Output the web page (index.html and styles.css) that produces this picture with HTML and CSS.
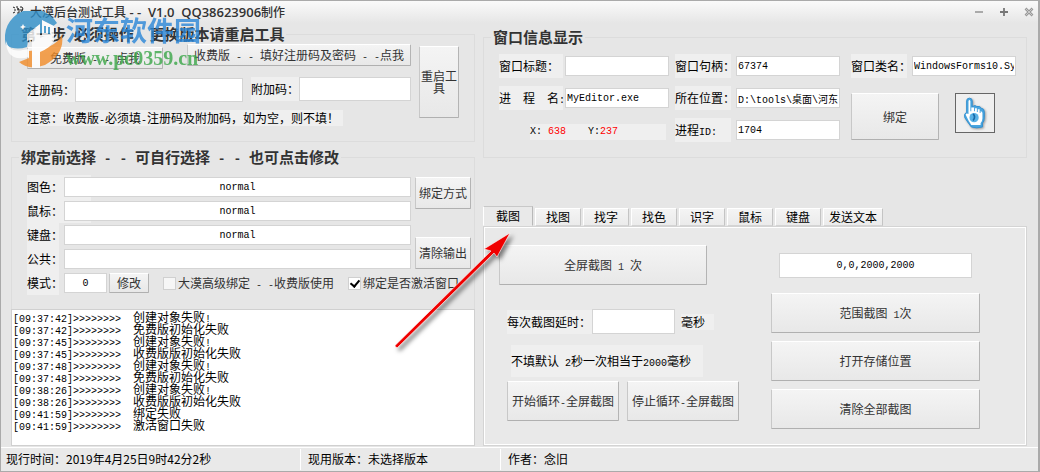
FILE: index.html
```html
<!DOCTYPE html>
<html lang="zh-CN">
<head>
<meta charset="utf-8">
<title>大漠后台测试工具</title>
<link rel="stylesheet" href="styles.css">
</head>
<body>
<div class="window">
  <header class="titlebar">
    <svg class="app-icon" viewBox="0 0 12 10" aria-hidden="true"><path d="M1 2l2 1M2 5h2M1 8l2-1M5 1v2l2 1M5 5l2-1v4M5 8h2M8 2h2l1 2-2 3M8 5h3" fill="none" stroke="#222" stroke-width="1"/></svg>
    <h1 class="title">大漠后台测试工具<span class="title-latin">&nbsp;- -&nbsp; V1.0&nbsp; QQ38623906</span>制作</h1>
    <div class="window-buttons">
      <button class="win-btn" aria-label="最小化"><svg viewBox="0 0 10 10"><path d="M1 5h8" stroke="#999" stroke-width="1.6"/></svg></button>
      <button class="win-btn" aria-label="最大化"><svg viewBox="0 0 10 10"><path d="M1 5h8M5 1v8" stroke="#777" stroke-width="1.8"/></svg></button>
      <button class="win-btn" aria-label="关闭"><svg viewBox="0 0 10 10"><path d="M1.5 1.5l7 7M8.500 1.500l-7 7" stroke="#999" stroke-width="2.600"/><path d="M2 2l6 6M8 2l-6 6" stroke="#ddd" stroke-width=".7"/></svg></button>
    </div>
  </header>

  <main class="main">
    <section class="left">
      <fieldset class="group">
        <legend>第一步<span class="half"> </span>必须操作<span class="half">&nbsp; </span>更换版本请重启工具</legend>
        <div class="register">
          <div class="register-body">
            <div class="stagger">
              <button class="btn free low">免费版<span class="half"> - - </span>点我</button>
              <button class="btn paid">收费版<span class="half"> - - </span>填好注册码及密码<span class="half"> - -</span>点我</button>
            </div>
            <div class="stagger">
              <div class="pair reg low"><label for="reg" class="tag w48">注册码：</label><input id="reg" class="box tall" type="text"></div>
              <div class="pair add"><label for="add" class="tag w48">附加码：</label><input id="add" class="box tall" type="text"></div>
            </div>
            <p class="note">注意：收费版<span class="half">-</span>必须填<span class="half">-</span>注册码及附加码，如为空，则不填！</p>
          </div>
          <button class="btn restart">重启工具</button>
        </div>
      </fieldset>

      <fieldset class="group open">
        <legend>绑定前选择<span class="half"> - - </span>可自行选择<span class="half"> - - </span>也可点击修改</legend>
        <div class="bind">
          <div class="bind-rows">
            <div class="bind-row shaded"><label for="b1" class="tag w32">图色：</label><input id="b1" class="box center" type="text" value="normal"></div>
            <div class="bind-row shaded"><label for="b2" class="tag w32">鼠标：</label><input id="b2" class="box center" type="text" value="normal"></div>
            <div class="bind-row"><label for="b3" class="tag w32">键盘：</label><input id="b3" class="box center" type="text" value="normal"></div>
            <div class="bind-row"><label for="b4" class="tag w32">公共：</label><input id="b4" class="box center" type="text"></div>
          </div>
          <div class="bind-buttons">
            <button class="btn side">绑定方式</button>
            <button class="btn side">清除输出</button>
          </div>
        </div>
        <div class="mode">
          <label for="mode" class="tag w32">模式：</label>
          <input id="mode" class="box center mode-box" type="text" value="0">
          <button class="btn modify">修改</button>
          <div class="check"><input id="c1" type="checkbox"><label for="c1">大漠高级绑定<span class="half"> - -</span>收费版使用</label></div>
          <div class="check"><input id="c2" type="checkbox" checked><label for="c2">绑定是否激活窗口</label></div>
        </div>
      </fieldset>

      <ol class="log">
        <li><span class="half">[09:37:42]&gt;&gt;&gt;&gt;&gt;&gt;&gt;&gt;  </span>创建对象失败<span class="half">!</span></li>
        <li><span class="half">[09:37:42]&gt;&gt;&gt;&gt;&gt;&gt;&gt;&gt;  </span>免费版初始化失败</li>
        <li><span class="half">[09:37:45]&gt;&gt;&gt;&gt;&gt;&gt;&gt;&gt;  </span>创建对象失败<span class="half">!</span></li>
        <li><span class="half">[09:37:45]&gt;&gt;&gt;&gt;&gt;&gt;&gt;&gt;  </span>收费版版初始化失败</li>
        <li><span class="half">[09:37:48]&gt;&gt;&gt;&gt;&gt;&gt;&gt;&gt;  </span>创建对象失败<span class="half">!</span></li>
        <li><span class="half">[09:37:48]&gt;&gt;&gt;&gt;&gt;&gt;&gt;&gt;  </span>免费版初始化失败</li>
        <li><span class="half">[09:38:26]&gt;&gt;&gt;&gt;&gt;&gt;&gt;&gt;  </span>创建对象失败<span class="half">!</span></li>
        <li><span class="half">[09:38:26]&gt;&gt;&gt;&gt;&gt;&gt;&gt;&gt;  </span>收费版版初始化失败</li>
        <li><span class="half">[09:41:59]&gt;&gt;&gt;&gt;&gt;&gt;&gt;&gt;  </span>绑定失败</li>
        <li><span class="half">[09:41:59]&gt;&gt;&gt;&gt;&gt;&gt;&gt;&gt;  </span>激活窗口失败</li>
      </ol>
    </section>

    <section class="right">
      <fieldset class="group info-group">
        <legend>窗口信息显示</legend>
        <div class="info">
          <div class="info-col first">
            <div class="pair"><label for="i1" class="tag w64">窗口标题：</label><input id="i1" class="box" type="text"></div>
            <div class="pair"><label for="i2" class="tag w64">进　程　名<span class="half">:</span></label><input id="i2" class="box" type="text" value="MyEditor.exe"></div>
            <div class="coords"><span>X: <output class="red">638</output></span><span>Y:<output class="red">237</output></span></div>
          </div>
          <div class="info-col second">
            <div class="pair"><label for="i3" class="tag w56">窗口句柄：</label><input id="i3" class="box" type="text" value="67374"></div>
            <div class="pair"><label for="i4" class="tag w56">所在位置：</label><input id="i4" class="box" type="text" value="D:\tools\桌面\河东"></div>
            <div class="pair"><label for="i5" class="tag w56">进程<span class="half">ID:</span></label><input id="i5" class="box" type="text" value="1704"></div>
          </div>
          <div class="info-col third">
            <div class="pair"><label for="i6" class="tag w56">窗口类名：</label><input id="i6" class="box" type="text" value="WindowsForms10.SysTreeView"></div>
            <div class="bind-actions">
              <button class="btn do-bind">绑定</button>
              <button class="hand" aria-label="选择窗口">
                <svg viewBox="0 0 28 34"><path d="M5 4q0-3 3-3t3 3v6l3-1 2 1 3 0 2 2q3 0 3 4v6q0 4-2 6v4q-6 2-12 0l-3-4-4-6q-1-4 1-5l1 1z" fill="#49a5df" stroke="#2e8fd0" stroke-width="1"/><path d="M7 20V4q1-2 2 0v11h1v-4h3v4h1v-3h2v4h1v-3h2v4h1v-2q2 0 2 2v6q0 3-2 5v2H10l-3-5-3-6q0-2 3-1z" fill="#fff"/><circle cx="13" cy="22" r="5" fill="#58b2e6"/><path d="M12 18q3 3 0 7" fill="none" stroke="#1769a8" stroke-width="1.800"/></svg>
              </button>
            </div>
          </div>
        </div>
      </fieldset>

      <div class="tabs" role="tablist">
        <button class="tab active" role="tab" aria-selected="true">截图</button>
        <button class="tab" role="tab">找图</button>
        <button class="tab" role="tab">找字</button>
        <button class="tab" role="tab">找色</button>
        <button class="tab" role="tab">识字</button>
        <button class="tab" role="tab">鼠标</button>
        <button class="tab" role="tab">键盘</button>
        <button class="tab long" role="tab">发送文本</button>
      </div>
      <div class="panel" role="tabpanel">
        <div class="panel-left">
          <button class="btn big shot">全屏截图<span class="half"> 1 </span>次</button>
          <div class="delay">
            <label for="delay" class="tag w85">每次截图延时：</label>
            <input id="delay" class="box tall" type="text">
            <span class="unit">毫秒</span>
          </div>
          <p class="hint">不填默认<span class="half"> 2</span>秒一次相当于<span class="half">2000</span>毫秒</p>
          <div class="loop">
            <button class="btn big">开始循环<span class="half">-</span>全屏截图</button>
            <button class="btn big">停止循环<span class="half">-</span>全屏截图</button>
          </div>
        </div>
        <div class="panel-right">
          <input class="box tall center range" type="text" aria-label="截图范围" value="0,0,2000,2000">
          <button class="btn big">范围截图<span class="half"> 1</span>次</button>
          <button class="btn big">打开存储位置</button>
          <button class="btn big">清除全部截图</button>
        </div>
      </div>
    </section>
  </main>

  <footer class="status">
    <span class="cell">现行时间：2019年4月25日9时42分2秒</span>
    <span class="cell">现用版本：未选择版本</span>
    <span class="cell">作者：念旧</span>
  </footer>

  <div class="watermark">
    <svg class="wm-logo" viewBox="0 0 58 58" aria-hidden="true">
      <path d="M1 34A28 28 0 0 1 52 12L40 22 24 24 22 36Q10 40 1 34z" fill="#2f8fc9"/>
      <path d="M57 24Q60 43 40 54Q24 60 14 51L24 47V40Q50 38 57 24z" fill="#f28c28"/>
      <path d="M1 30Q4 42 18 39L24 38V46Q10 50 4 42Q1 37 1 30z" fill="#fff"/>
      <path d="M22 23l13-10v14q5-3 9 0v9q-4 3-9 5v16h-8V28l-5 2z" fill="#fff"/>
      <path d="M37 9l12 6v15l-5 6V27l-7-2z" fill="#fff"/>
      <path d="M40 15v7M44 16v7" stroke="#2f8fc9" stroke-width="2"/>
      <path d="M18 13l1 2 2 1-2 1-1 2-1-2-2-1 2-1z" fill="#fff"/>
    </svg>
    <div class="wm-text"><span class="wm-name">河东软件园</span><span class="wm-url">www.pc0359.cn</span></div>
  </div>

  <svg class="arrow" viewBox="0 0 130 130" aria-hidden="true">
    <g stroke="#fff" stroke-opacity=".6" stroke-width="1"><path d="M5 116.500L101 22 94 20 120 4 107 28 104 24 7.500 118.500Q5 119 5 116.500z" fill="#f00000"/></g>
  </svg>
</div>
</body>
</html>
```

FILE: styles.css
```css
* { box-sizing: border-box; }

body {
  margin: 0;
  font: 12px/16px "Noto Sans CJK SC", sans-serif;
  color: #000;
}

button, input { font: inherit; color: inherit; margin: 0; }
p, h1, ol { margin: 0; padding: 0; }

.half {
  font-family: "Liberation Mono", monospace;
  font-size: 10px;
  line-height: 0;
  white-space: pre;
}

.window {
  position: relative;
  display: flex;
  flex-direction: column;
  min-height: 100vh;
  background: #e6e6e6;
  border: 1px solid #aaa;
  border-right-width: 2px;
}

/* title bar */
.titlebar {
  display: flex;
  align-items: center;
  height: 22px;
  padding: 0 4px 0 11px;
  background: linear-gradient(#fafafa, #e6e6e6);
}
.app-icon { width: 12px; height: 10px; margin-bottom: 4px; }
.title {
  flex: 1;
  margin-left: 6px;
  font-size: 12px;
  line-height: 20px;
  font-weight: 500;
  color: #333;
}
.title-latin { font: 600 13px/1 "Open Sans", sans-serif; }
.window-buttons { display: flex; gap: 15px; }
.win-btn { width: 10px; height: 10px; padding: 0; border: 0; background: none; display: flex; }
.win-btn svg { width: 10px; height: 10px; }

/* page columns */
.main {
  flex: 1;
  display: grid;
  grid-template-columns: 464fr 544fr;
  gap: 8px;
  padding: 0 11px 1px 10px;
}
.left, .right { display: flex; flex-direction: column; min-width: 0; }
.left { padding-top: 1px; }
.right { padding-top: 4px; }

.group {
  min-width: 0;
  margin: 0;
  padding: 0 15px 15px;
  border: 1px solid #dcdcdc;
}
.group legend {
  padding: 0 2px;
  margin-left: -8px;
  font-size: 15px;
  line-height: 20px;
  font-weight: 700;
  color: #333;
}
.group legend .half { font-size: 13px; }

/* shared controls */
.btn {
  padding: 0;
  border: 1px solid;
  border-color: #fff #b4b4b4 #b0b0b0 #c8c8c8;
  border-radius: 1px;
  background: linear-gradient(#f4f4f4, #e8e8e8);
  color: #333;
  line-height: 16px;
}
.big { height: 40px; }
.box {
  flex: 1;
  width: 0;
  min-width: 0;
  height: 20px;
  padding: 0 1px;
  border: 1px solid #d4d4d4;
  border-radius: 0;
  background: #fff;
  font: 10px "Liberation Mono", "Noto Sans CJK SC", monospace;
}
.tall { height: 25px; }
.center { text-align: center; }
.tag {
  flex: none;
  height: 24px;
  line-height: 24px;
  background: #efefef;
  white-space: nowrap;
}
.w32 { width: 32px; }
.w48 { width: 48px; }
.w56 { width: 56px; }
.w64 { width: 64px; }
.w85 { width: 85px; }
.pair { display: flex; align-items: center; }

/* registration */
.register { display: flex; gap: 8px; }
.register-body { flex: 1; display: flex; flex-direction: column; gap: 8px; }
.stagger { display: flex; justify-content: space-between; align-items: flex-start; height: 25px; gap: 8px; }
.low { align-self: flex-end; }
.free { width: 136px; height: 22px; }
.paid { width: 224px; height: 22px; }
.stagger .tall { height: 24px; }
.reg { flex: 216; }
.add { flex: 160; }
.note { align-self: flex-start; padding-right: 4px; background: #efefef; }
.restart { width: 40px; height: 72px; margin-top: 2px; line-height: 12px; }

/* binding */
.open { margin-top: 5px; padding: 8px 3px 14px 15px; border-bottom: 0; }
.bind { display: flex; gap: 4px; }
.bind-rows { flex: 1; }
.bind-row { display: flex; align-items: center; gap: 5px; }
.shaded { background: linear-gradient(#efefef, #efefef) 0 0 / 64px 100% no-repeat; }
.bind-buttons { display: flex; flex-direction: column; gap: 28px; padding-top: 2px; }
.side { width: 56px; height: 32px; }
.mode { display: flex; align-items: center; }
.mode-box { flex: none; width: 43px; margin: 0 2px 0 5px; }
.modify { width: 40px; height: 20px; }
.check { display: flex; align-items: center; margin-left: 14px; color: #333; gap: 2px; white-space: nowrap; }
.check input {
  appearance: none;
  width: 13px;
  height: 13px;
  border: 1px solid #d0d0d0;
  background: #f6f6f6;
}
.check input:checked { background: #fff; }
.check input:checked::before {
  content: "";
  display: block;
  width: 4px;
  height: 7px;
  margin: 0 0 0 3px;
  border: solid #000;
  border-width: 0 2px 2px 0;
  transform: rotate(40deg);
}

.log {
  flex: 1;
  padding: 1px;
  list-style: none;
  border: 1px solid #d0d0d0;
  background: #fff;
  line-height: 12px;
}
.log li { height: 12px; white-space: pre; }

/* window information */
.info-group { padding: 7px 10px 15px 15px; }
.info { display: flex; }
.info-col { flex: 165; min-width: 0; display: flex; flex-direction: column; gap: 8px; }
.first { flex: 170; }
.first .pair { gap: 2px; }
.second { margin-left: 6px; }
.third { margin-left: 11px; gap: 15px; }
.second .pair, .third .pair { gap: 5px; }
.coords {
  display: flex;
  gap: 22px;
  margin: 6px 3px 0 31px;
  background: #efefef;
  font: 10px/16px "Liberation Mono", monospace;
}
.red { color: #f00; }
.bind-actions { display: flex; gap: 16px; }
.do-bind { width: 88px; height: 47px; }
.hand {
  width: 40px;
  height: 40px;
  padding: 0;
  border: 1px solid #666;
  background: #efefef;
  display: flex;
  align-items: center;
  justify-content: center;
}
.hand svg { width: 26px; height: 32px; filter: drop-shadow(1px 1px 1px #999); }

/* tabs */
.tabs { display: flex; align-items: flex-end; gap: 2px; margin-top: 48px; }
.tab {
  width: 46px;
  height: 18px;
  padding: 0;
  border: 1px solid;
  border-color: #fff #c4c4c4 #d4d4d4 #fff;
  background: linear-gradient(#f4f4f4, #ebebeb);
  line-height: 16px;
}
.tab.active {
  width: 50px;
  height: 20px;
  border-color: #c8c8c8 #b8b8b8 #e9e9e9 #fff;
  background: #e9e9e9;
}
.tab.long { width: 60px; }
.panel {
  flex: 1;
  display: grid;
  grid-template-columns: 240fr 208fr;
  gap: 32px;
  padding: 18px 46px 16px 14px;
  border: 1px solid #d4d4d4;
  box-shadow: inset 0 0 0 1px #fff;
  background: #e9e9e9;
}
.panel-left { display: flex; flex-direction: column; padding-left: 9px; }
.shot { width: 208px; margin-left: -8px; }
.delay { display: flex; align-items: center; margin-top: 24px; }
.delay .box { flex: none; width: 83px; }
.unit { width: 33px; margin-left: 6px; background: #efefef; }
.hint { width: 192px; margin: 11px 0 4px 4px; line-height: 32px; background: #efefef; white-space: nowrap; }
.loop { display: flex; gap: 8px; }
.loop .btn { flex: 1; white-space: nowrap; }
.panel-right { display: flex; flex-direction: column; gap: 8px; padding-top: 8px; }
.range { flex: none; width: auto; margin: 0 8px 7px; }

/* status bar */
.status {
  display: flex;
  height: 24px;
  padding: 1px 0;
  border-top: 1px solid #fff;
  background: #e9e9e9;
  line-height: 20px;
}
.cell { width: 200px; padding-left: 7px; border-left: 1px solid #fff; }
.cell:first-child { width: 299px; padding-left: 5px; border: 0; }

/* overlays */
.watermark {
  position: absolute;
  left: 4px;
  top: 10px;
  display: flex;
  gap: 3px;
  opacity: .8;
  pointer-events: none;
}
.wm-logo { width: 58px; height: 58px; }
.wm-text { display: flex; flex-direction: column; }
.wm-name { font-size: 27px; line-height: 37px; font-weight: 700; color: #2a86d8; }
.wm-url { font: 700 20px/20px "Liberation Serif", serif; color: #3aa648; }
.arrow {
  position: absolute;
  left: 389px;
  top: 228px;
  width: 130px;
  height: 130px;
  filter: drop-shadow(3px 3px 2px rgba(0, 0, 0, .5));
  pointer-events: none;
}
```
